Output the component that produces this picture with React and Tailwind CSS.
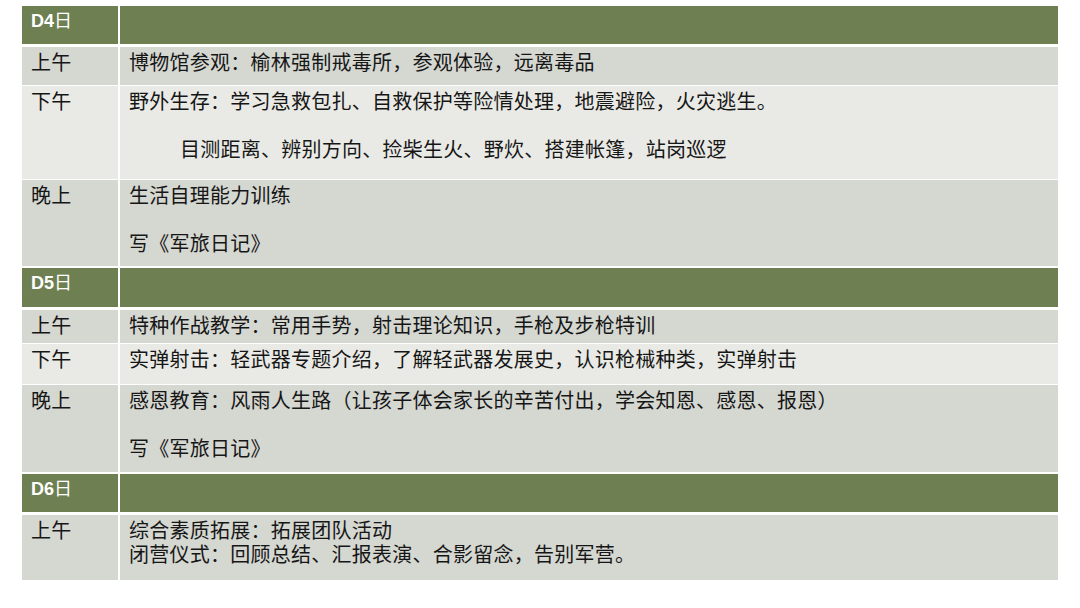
const rows = [
  { day: 'D4', h: 'h-[38px]', gap: 'mb-[3px]' },
  { label: '上午', h: 'h-[38px]', bg: 'bg-[#d5d7d1]', gap: 'mb-px', lines: ['博物馆参观：榆林强制戒毒所，参观体验，远离毒品'] },
  {
    label: '下午',
    h: 'h-[93px]',
    bg: 'bg-[#e9eae5]',
    gap: 'mb-px',
    lines: ['野外生存：学习急救包扎、自救保护等险情处理，地震避险，火灾逃生。', '', { indent: true, text: '目测距离、辨别方向、捡柴生火、野炊、搭建帐篷，站岗巡逻' }],
  },
  { label: '晚上', h: 'h-[86px]', bg: 'bg-[#d5d7d1]', gap: 'mb-[2px]', lines: ['生活自理能力训练', '', '写《军旅日记》'] },
  { day: 'D5', h: 'h-[39px]', gap: 'mb-[3px]' },
  { label: '上午', h: 'h-[33px]', bg: 'bg-[#d5d7d1]', gap: 'mb-px', lines: ['特种作战教学：常用手势，射击理论知识，手枪及步枪特训'] },
  { label: '下午', h: 'h-[40px]', bg: 'bg-[#e9eae5]', gap: 'mb-px', lines: ['实弹射击：轻武器专题介绍，了解轻武器发展史，认识枪械种类，实弹射击'] },
  {
    label: '晚上',
    h: 'h-[87px]',
    bg: 'bg-[#d5d7d1]',
    gap: 'mb-[2px]',
    lines: ['感恩教育：风雨人生路（让孩子体会家长的辛苦付出，学会知恩、感恩、报恩）', '', '写《军旅日记》'],
  },
  { day: 'D6', h: 'h-[38px]', gap: 'mb-[3px]' },
  {
    label: '上午',
    h: 'h-[65px]',
    bg: 'bg-[#d5d7d1]',
    gap: '',
    lines: ['综合素质拓展：拓展团队活动', '闭营仪式：回顾总结、汇报表演、合影留念，告别军营。'],
  },
];

function DayRow({ day, h, gap }) {
  return (
    <div className={`flex gap-[2px] ${h} ${gap}`}>
      <div className="w-[96px] bg-[#6e7f52] pl-[9px] pt-[3px] text-[18px] font-bold leading-[24px] text-white">
        {day}
        <span className="font-normal">日</span>
      </div>
      <div className="flex-1 bg-[#6e7f52]" />
    </div>
  );
}

function ScheduleRow({ label, lines, h, bg, gap }) {
  return (
    <div className={`flex gap-[2px] ${h} ${gap}`}>
      <div className={`w-[96px] pl-[9px] pt-[4px] tracking-[0.25px] ${bg}`}>{label}</div>
      <div className={`flex-1 pl-[9px] pt-[4px] tracking-[0.25px] ${bg}`}>
        {lines.map((line, i) =>
          typeof line === 'string' ? (
            <div key={i} className="h-[24px] whitespace-nowrap">
              {line}
            </div>
          ) : (
            <div key={i} className="h-[24px] whitespace-nowrap pl-[51px]">
              {line.text}
            </div>
          ),
        )}
      </div>
    </div>
  );
}

export default function App() {
  return (
    <div className="h-[608px] w-[1080px] bg-white pl-[22px] pt-[6px] font-['Liberation_Sans','Noto_Sans_CJK_SC',sans-serif] text-[20px] leading-[24px] text-[#161616]">
      <div className="flex w-[1036px] flex-col">
        {rows.map((row, i) => (row.day ? <DayRow key={i} {...row} /> : <ScheduleRow key={i} {...row} />))}
      </div>
    </div>
  );
}
